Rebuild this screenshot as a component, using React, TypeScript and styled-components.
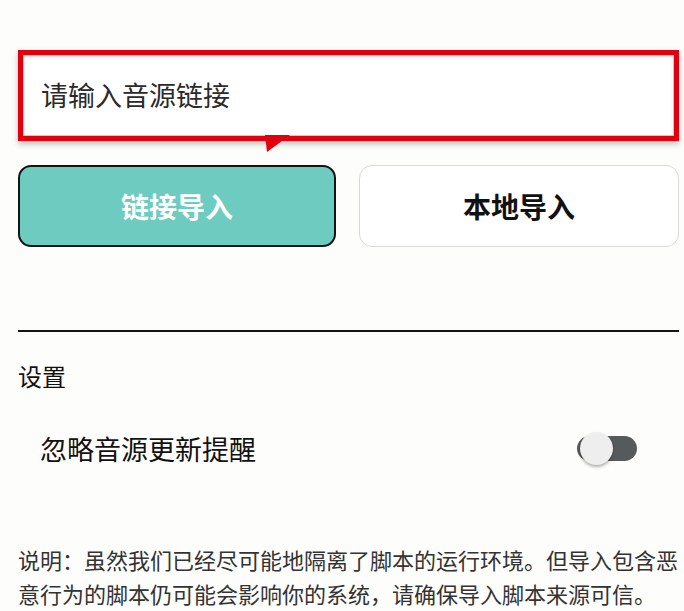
import React, { useState } from 'react'
import styled, { createGlobalStyle } from 'styled-components'

const GlobalStyle = createGlobalStyle`
    html, body {
        margin: 0;
        padding: 0;
        background: #fdfdfb;
    }
    body {
        font-family: "Noto Sans CJK SC", "Noto Sans", sans-serif;
        color: #1c1c1c;
    }
`

const StyledPage = styled.div`
    width: 684px;
    height: 611px;
    box-sizing: border-box;
    padding: 50px 5px 0 18px;
    overflow: hidden;
`

const StyledCallout = styled.div`
    position: relative;
    height: 91px;
    box-sizing: border-box;
    border: 5px solid #e1000e;
    box-shadow: 0 3px 6px rgba(0, 0, 0, 0.25);
    background: #fff;
`

const StyledCalloutInner = styled.div`
    height: 100%;
    box-sizing: border-box;
    display: flex;
    align-items: center;
    padding: 0 0 2px 18px;
    box-shadow: inset 0 0 0 1px #c9c9c9, inset 0 2px 4px rgba(0, 0, 0, 0.12);
    font-size: 27px;
    color: #2a2a2a;
`

const StyledTail = styled.svg`
    position: absolute;
    left: 221px;
    bottom: -17px;
`

const StyledButtonRow = styled.div`
    display: grid;
    grid-template-columns: 318px 320px;
    gap: 23px;
    margin-top: 24px;
`

const StyledButton = styled.button<{ $primary?: boolean }>`
    height: 82px;
    box-sizing: border-box;
    border-radius: 13px;
    border: ${({ $primary }) => ($primary ? '2px solid #141414' : '1.5px solid #d9d9d9')};
    background: ${({ $primary }) => ($primary ? '#6dcbc0' : '#ffffff')};
    color: ${({ $primary }) => ($primary ? '#ffffff' : '#111111')};
    font-family: "Noto Sans CJK SC", "Noto Sans", sans-serif;
    font-size: 28px;
    font-weight: 700;
    padding: 0;
    cursor: pointer;
`

const StyledDivider = styled.hr`
    margin: 83px 0 0;
    border: none;
    height: 2px;
    background: #151515;
`

const StyledSectionTitle = styled.div`
    margin-top: 28px;
    font-size: 24px;
    line-height: 32px;
    color: #111;
`

const StyledSettingRow = styled.div`
    display: flex;
    align-items: center;
    justify-content: space-between;
    margin-top: 38px;
    padding: 0 42px 0 22px;
    height: 36px;
    font-size: 27px;
    color: #111;
`

const StyledToggle = styled.button<{ $on: boolean }>`
    position: relative;
    width: 60px;
    height: 25px;
    border: none;
    border-radius: 13px;
    padding: 0;
    background: ${({ $on }) => ($on ? '#6dcbc0' : '#565a5a')};
    cursor: pointer;

    &::after {
        content: '';
        position: absolute;
        top: 50%;
        left: ${({ $on }) => ($on ? '41px' : '19px')};
        width: 33px;
        height: 33px;
        margin: -16.5px 0 0 -16.5px;
        border-radius: 50%;
        background: #eeeeee;
        box-shadow: 0 2px 3px rgba(0, 0, 0, 0.3);
    }
`

const StyledNote = styled.p`
    margin: 76px 0 0;
    font-size: 22px;
    line-height: 34px;
    color: #333;
`

const App = () => {
    const [ignoreUpdates, setIgnoreUpdates] = useState(false)

    return (
        <StyledPage>
            <GlobalStyle />
            <StyledCallout>
                <StyledCalloutInner>请输入音源链接</StyledCalloutInner>
                <StyledTail width="48" height="18" viewBox="0 0 48 18">
                    <polygon points="21,0 46,0 23,17" fill="#e1000e" />
                </StyledTail>
            </StyledCallout>

            <StyledButtonRow>
                <StyledButton $primary>链接导入</StyledButton>
                <StyledButton>本地导入</StyledButton>
            </StyledButtonRow>

            <StyledDivider />

            <StyledSectionTitle>设置</StyledSectionTitle>
            <StyledSettingRow>
                <span>忽略音源更新提醒</span>
                <StyledToggle $on={ignoreUpdates} onClick={() => setIgnoreUpdates(!ignoreUpdates)} />
            </StyledSettingRow>

            <StyledNote>
                说明：虽然我们已经尽可能地隔离了脚本的运行环境。但导入包含恶意行为的脚本仍可能会影响你的系统，请确保导入脚本来源可信。
            </StyledNote>
        </StyledPage>
    )
}

export default App
